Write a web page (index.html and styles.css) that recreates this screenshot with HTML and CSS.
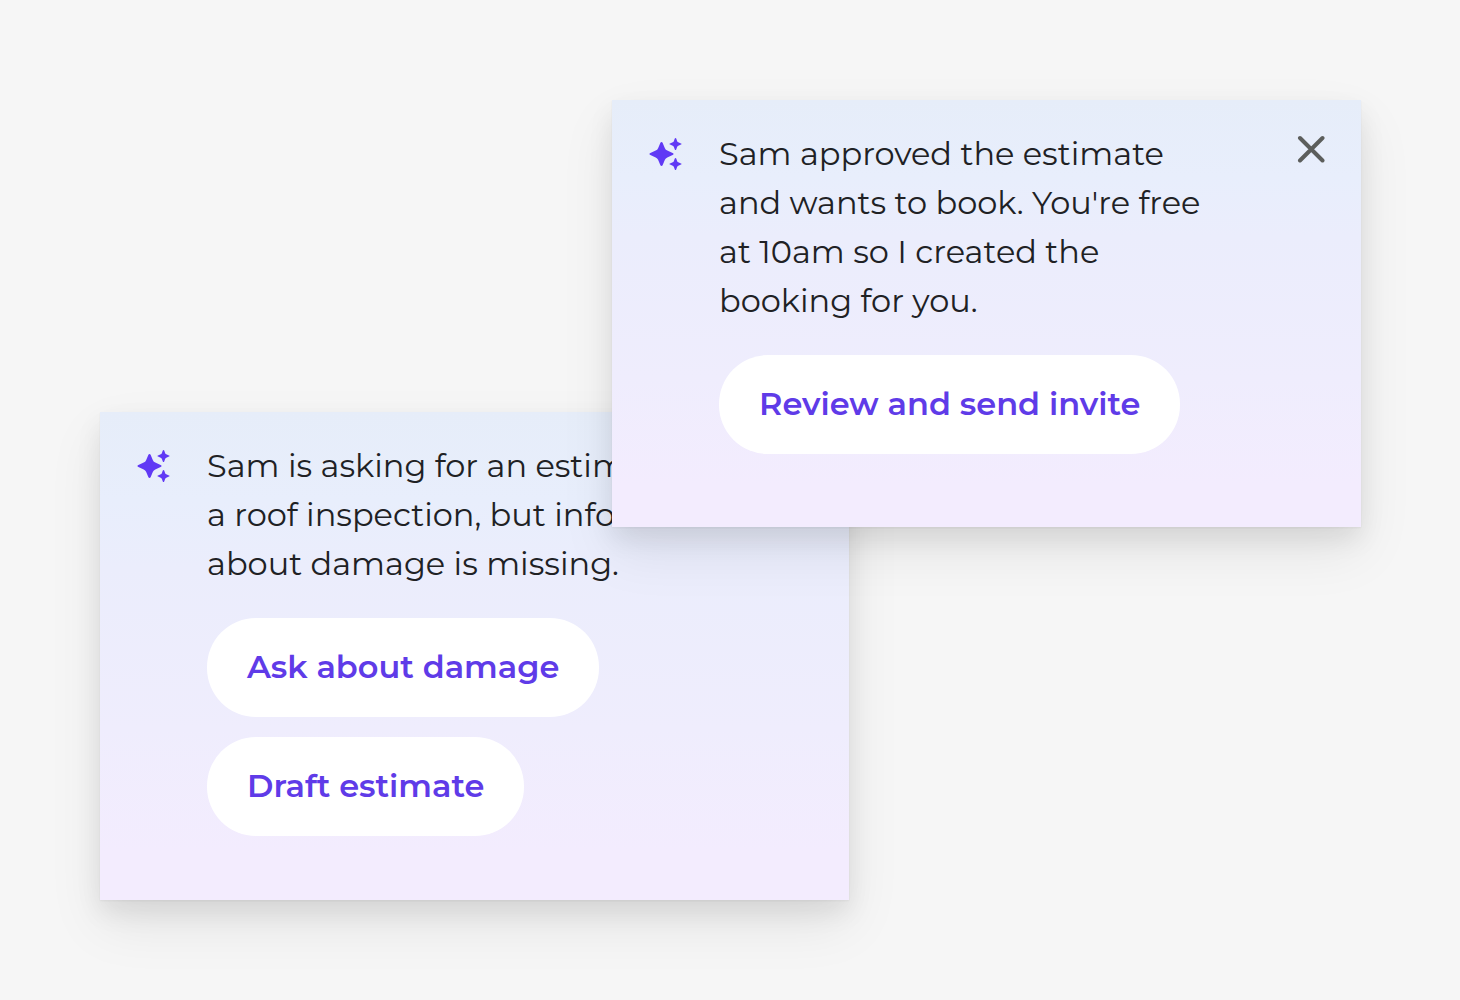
FILE: index.html
```html
<!DOCTYPE html>
<html lang="en">
<head>
<meta charset="utf-8">
<meta name="viewport" content="width=device-width, initial-scale=1">
<title>Booking suggestions</title>
<link rel="stylesheet" href="styles.css">
</head>
<body>
<svg class="sprite" aria-hidden="true">
  <symbol id="sparkles" viewBox="0 0 36 36">
    <path d="M13.5 6 Q14.3 6 14.7 6.9 L16.9 12.2 Q17.6 13.9 19.3 14.6 L24.6 16.9 Q25.6 17.4 25.6 18 Q25.6 18.6 24.6 19.1 L19.3 21.4 Q17.6 22.1 16.9 23.8 L14.7 29.1 Q14.3 30 13.5 30 Q12.7 30 12.3 29.1 L10.1 23.8 Q9.4 22.1 7.7 21.4 L2.4 19.1 Q1.4 18.6 1.4 18 Q1.4 17.4 2.4 16.9 L7.7 14.6 Q9.4 13.9 10.1 12.2 L12.3 6.9 Q12.7 6 13.5 6 Z"/>
    <path id="spark-small" d="M27.5 2 Q28 2 28.2 2.6 L29.2 5.2 Q29.5 6 30.3 6.3 L33 7.4 Q33.6 7.7 33.6 8 Q33.6 8.3 33 8.6 L30.3 9.7 Q29.5 10 29.2 10.8 L28.2 13.4 Q28 14 27.5 14 Q27 14 26.8 13.4 L25.8 10.8 Q25.5 10 24.7 9.7 L22 8.6 Q21.4 8.3 21.4 8 Q21.4 7.7 22 7.4 L24.7 6.3 Q25.5 6 25.8 5.2 L26.8 2.6 Q27 2 27.5 2 Z"/>
    <use href="#spark-small" y="20"/>
  </symbol>
</svg>
<main class="stage">
  <section class="card card-back">
    <svg class="sparkles" aria-hidden="true"><use href="#sparkles"/></svg>
    <div class="content">
      <p class="message">Sam is asking for an estimate for<br>a roof inspection, but information<br>about damage is missing.</p>
      <div class="actions">
        <button class="action" type="button">Ask about damage</button>
        <button class="action" type="button">Draft estimate</button>
      </div>
    </div>
  </section>
  <section class="card card-front">
    <svg class="sparkles" aria-hidden="true"><use href="#sparkles"/></svg>
    <div class="content">
      <p class="message">Sam approved the estimate<br>and wants to book. You're free<br>at 10am so I created the<br>booking for you.</p>
      <div class="actions">
        <button class="action" type="button">Review and send invite</button>
      </div>
    </div>
    <button class="close" type="button" aria-label="Dismiss">
      <svg viewBox="0 0 28 28" aria-hidden="true"><path d="M3 3 L25.5 25.5 M25.5 3 L3 25.5"/></svg>
    </button>
  </section>
</main>
</body>
</html>
```

FILE: styles.css
```css
* {
  box-sizing: border-box;
}

body {
  margin: 0;
  background: #f6f6f6;
  color: #202124;
  font-family: Montserrat, Inter, "Liberation Sans", sans-serif;
}

.sprite {
  position: absolute;
  width: 0;
  height: 0;
}

/* The two cards share the middle column, where the front one overlaps. */
.stage {
  display: grid;
  grid-template-columns: 512fr 237fr 512fr;
  align-items: start;
  padding: 100px 99px 100px 100px;
}

.card {
  display: flex;
  grid-row: 1;
  gap: 35px;
  padding: 29px 36px 64px;
  background: linear-gradient(#e6edf9, #e8eefc 18%, #ebedfc 32%, #efedfd 65%, #f3ecfe 90%);
  box-shadow: 0 1px 2px rgba(0, 0, 0, .05), 0 12px 24px rgba(0, 0, 0, .08), 0 24px 52px rgba(0, 0, 0, .08);
}

.card-back {
  grid-column: 1 / 3;
  margin-top: 312px;
}

.card-front {
  grid-column: 2 / 4;
  min-height: 427px;
}

.sparkles {
  flex: none;
  width: 36px;
  height: 36px;
  margin-top: 7px;
  fill: #6039f5;
}

.content {
  flex: 1;
  min-width: 0;
}

.message {
  margin: 0 0 30px;
  font-size: 32px;
  line-height: 49px;
  font-weight: 400;
  white-space: nowrap;
}

.actions {
  display: flex;
  flex-direction: column;
  align-items: flex-start;
  gap: 20px;
}

.action {
  padding: 24px 40px 26px;
  border: 0;
  border-radius: 49px;
  background: #fff;
  color: #5f3be8;
  font: inherit;
  font-size: 32px;
  line-height: 49px;
  font-weight: 600;
  cursor: pointer;
}

.close {
  flex: none;
  align-self: flex-start;
  width: 28px;
  height: 28px;
  margin-top: 6px;
  padding: 0;
  border: 0;
  background: none;
  cursor: pointer;
}

.close svg {
  display: block;
  fill: none;
  stroke: #5c5e5c;
  stroke-width: 4;
  stroke-linecap: round;
}
```
